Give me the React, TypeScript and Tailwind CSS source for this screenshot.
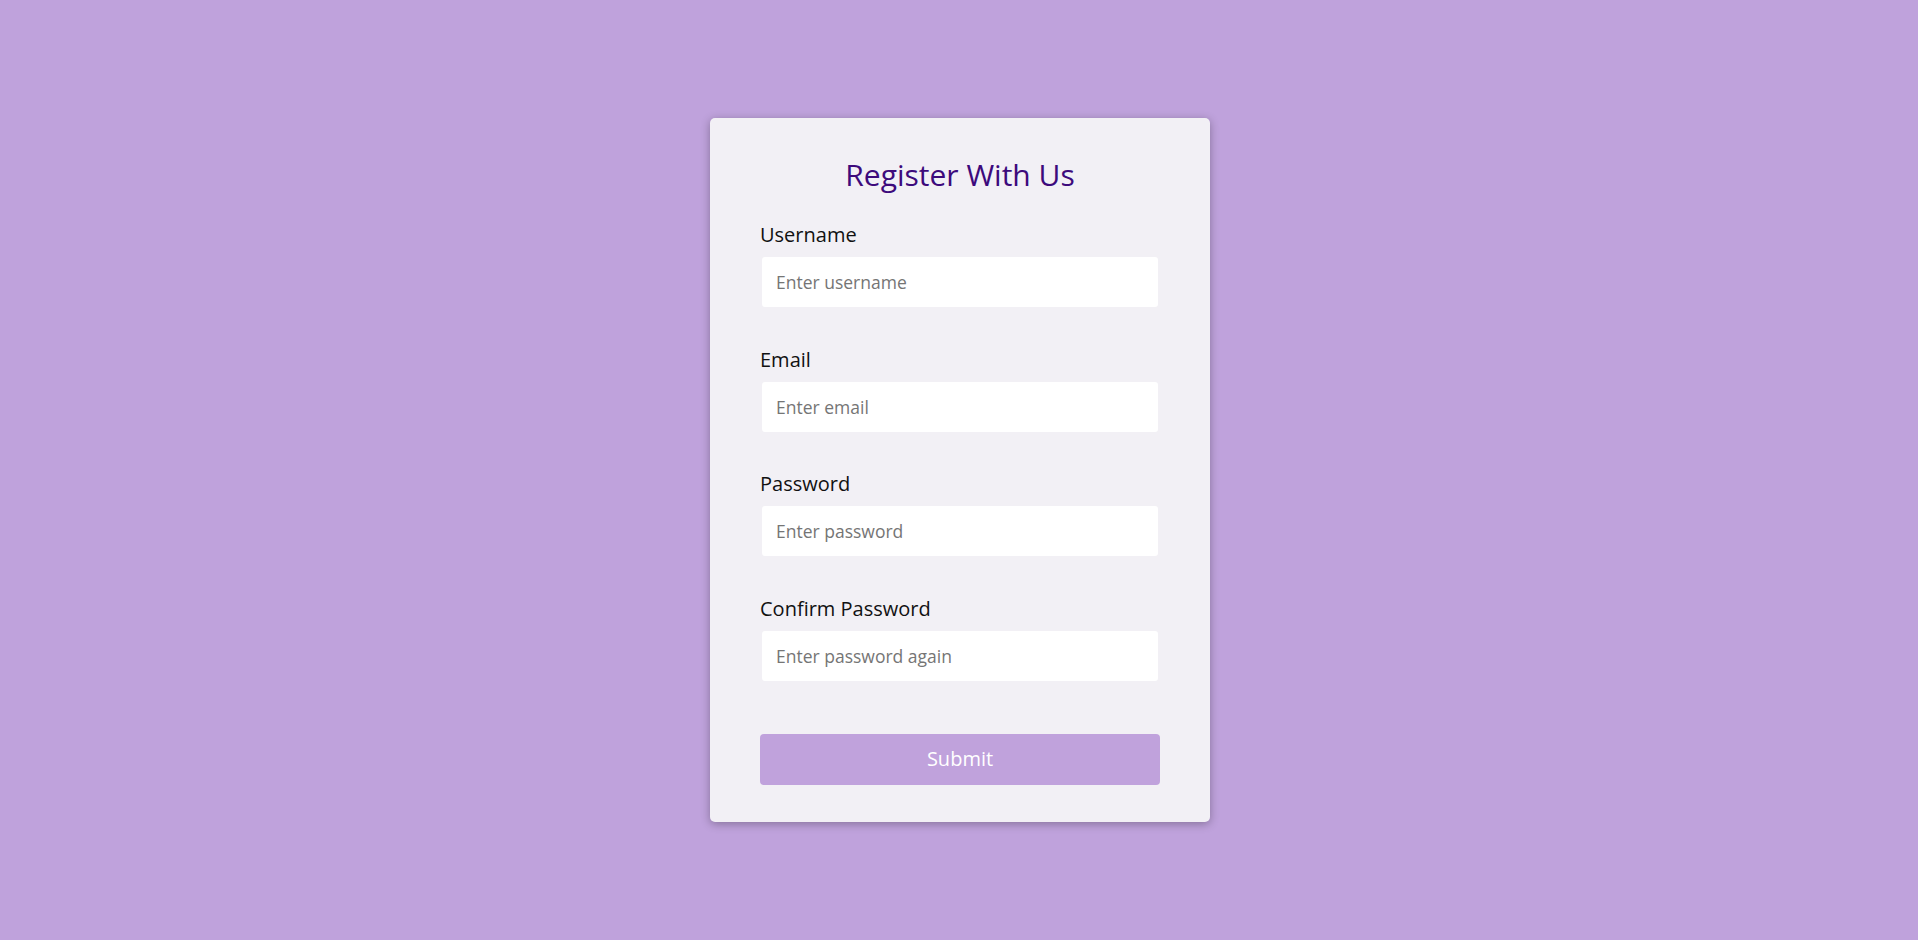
const fields = [
  { id: 'username', label: 'Username', type: 'text', placeholder: 'Enter username' },
  { id: 'email', label: 'Email', type: 'email', placeholder: 'Enter email' },
  { id: 'password', label: 'Password', type: 'password', placeholder: 'Enter password' },
  { id: 'password2', label: 'Confirm Password', type: 'password', placeholder: 'Enter password again' },
];

export default function App() {
  return (
    <div
      className="flex min-h-screen items-center justify-center bg-[#bfa2dc]"
      style={{ fontFamily: '"Open Sans", "Noto Sans", sans-serif' }}
    >
      <div className="ml-[2px] w-[500px] rounded-[5px] bg-[#f2f0f5] px-[50px] pt-[35px] pb-[37px] shadow-[0_2px_10px_rgba(0,0,0,0.3)]">
        <h2 className="text-center text-[30px] leading-[44px] font-medium text-[#3d0a7c]">Register With Us</h2>
        <form className="mt-[25px] flex flex-col" onSubmit={(e) => e.preventDefault()}>
          <div className="flex flex-col gap-[37.5px]">
            {fields.map((f) => (
              <div key={f.id} className="flex flex-col">
                <label htmlFor={f.id} className="text-[20px] leading-[26px] text-[#111]">
                  {f.label}
                </label>
                <input
                  id={f.id}
                  type={f.type}
                  placeholder={f.placeholder}
                  className="mt-[7px] h-[54px] w-full rounded-[5px] border-2 border-[#f2f0f5] bg-white px-[14px] text-[17.5px] text-[#333] outline-none placeholder:text-[#757575]"
                />
              </div>
            ))}
          </div>
          <button
            type="submit"
            className="mt-[51px] h-[51px] w-full rounded-[4px] bg-[#c0a2dc] text-[20px] text-white"
          >
            Submit
          </button>
        </form>
      </div>
    </div>
  );
}
